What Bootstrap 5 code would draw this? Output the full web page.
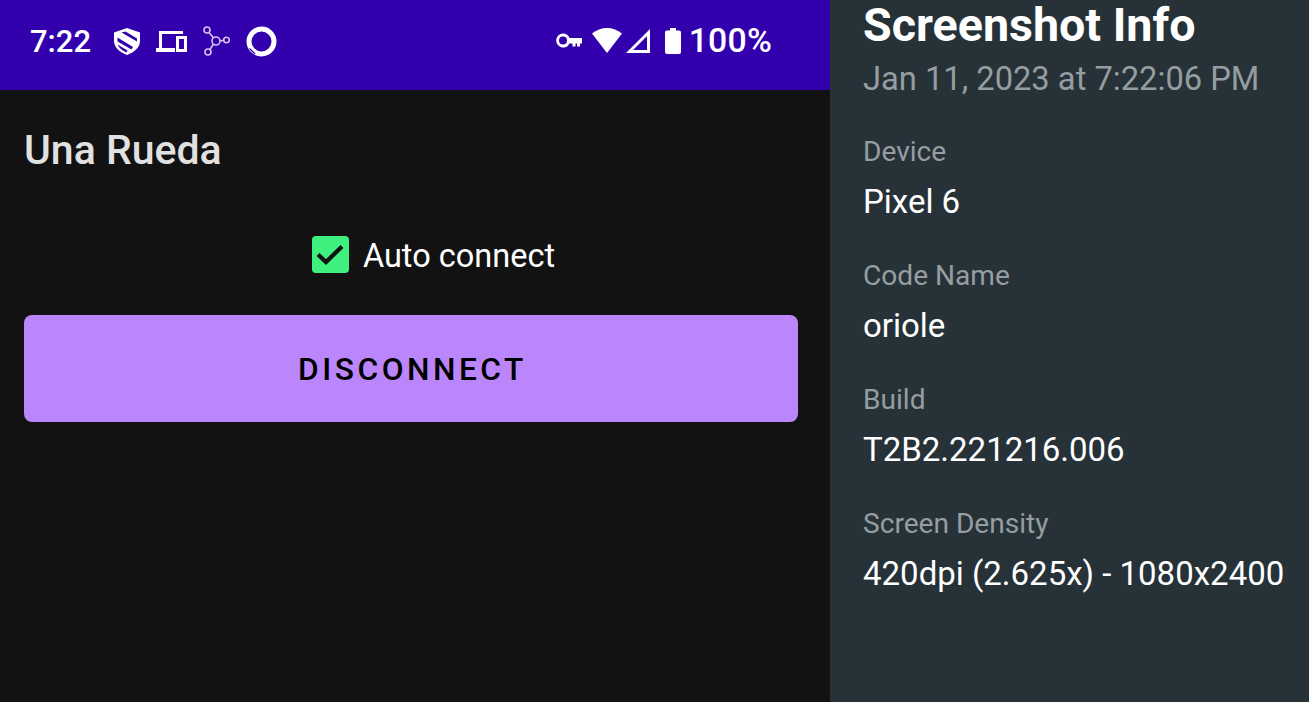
<!DOCTYPE html>
<html lang="en">
<head>
<meta charset="utf-8">
<title>Screenshot</title>
<link href="https://cdn.jsdelivr.net/npm/bootstrap@5.3.0/dist/css/bootstrap.min.css" rel="stylesheet">
<style>
html,body{height:702px;overflow:hidden;margin:0;background:#121212;font-family:Roboto,"Liberation Sans",sans-serif}
.shell{width:1309px;height:702px}
.phone{width:830px;background:#121212}
.statusbar{height:90px;background:#3300ae;padding:0 58px 8px 30px;color:#fff}
.clock{font-size:31px;font-weight:500;line-height:1;width:62px;margin-right:22px}
.pct{font-size:33.800px;font-weight:500;line-height:1;margin-left:8px;color:#fff;letter-spacing:.2px}
.icos{gap:16px}
.gap-key{margin-right:10px}
.gap-wifi{margin-right:4px}
.gap-sig{margin-right:15px}
.app-body{padding:37px 32px 0 24px}
.app-title{font-size:41px;font-weight:500;line-height:44px;color:#e1e1e1;margin:0;padding-top:1px}
.check-row{margin-top:58px;height:50px;gap:14px;padding-left:45px}
.box{width:37px;height:37px;background:#3ff07e;border-radius:4px;margin-bottom:2px}
.check-label{font-size:32.500px;line-height:1;color:#fff;padding-top:2px;font-weight:400}
.disc{display:block;width:100%;height:107px;margin-top:35px;padding-left:15px;background:#bb86fc;border:0;border-radius:8px;color:#000;font-size:31.700px;font-weight:500;letter-spacing:3.500px;line-height:1;padding-top:9px;--bs-btn-hover-bg:#bb86fc;--bs-btn-hover-color:#000}
.side{width:479px;background:#263238;padding:0 0 0 33px;color:#fff}
.side-h{font-size:46.600px;font-weight:700;line-height:50px;margin:0;color:#fff}
.side-date{font-size:32.700px;line-height:38px;margin-top:10px;color:#969da1;white-space:nowrap}
.lbl{font-size:28.100px;line-height:32px;color:#969da1}
.val{font-size:33px;line-height:38px;color:#fff;margin-top:15px;white-space:nowrap}
.item{margin-top:39px}
.item-first{margin-top:38px}
</style>
</head>
<body>
<div class="shell d-flex">
  <div class="phone flex-shrink-0">
    <div class="statusbar d-flex align-items-center justify-content-between">
      <div class="d-flex align-items-center">
        <span class="clock">7:22</span>
        <div class="d-flex align-items-center icos">
          <svg width="26" height="27" viewBox="0 0 26 27"><path fill="#fff" d="M13 0 26 4.500V13c0 6.500-5.500 11-13 14C5.500 24 0 19.500 0 13V4.500z"/><path fill="#3300ae" d="M3.500 9.500 19 19l-1.500 2.500L3.500 13.500zM7.500 4.500 23 13.500V10.500L11.500 3.500zM3.500 16.500l10 6-1 2C9 23 5 20 3.500 16.500z"/></svg>
          <svg width="31" height="21" viewBox="0 0 31 21"><path fill="#fff" fill-rule="evenodd" d="M3 0h24v3H6v14h13v4H0v-4h3zM20 5h11v16H20zm3 3v10h5V8z"/></svg>
          <svg width="27" height="30" viewBox="0 0 27 30" fill="none" stroke="#d5c3f0" stroke-width="1.600"><circle cx="4" cy="4" r="3"/><circle cx="5" cy="26" r="3"/><circle cx="23.500" cy="14" r="2.800"/><circle cx="13" cy="15" r="4"/><path d="M6 6.500l4.500 5.500M7 23.500l3.500-5.500M17 15l4-.7"/></svg>
          <svg width="31" height="31" viewBox="0 0 31 31" fill="none"><circle cx="15.500" cy="15.500" r="12.500" stroke="#fff" stroke-width="5"/><path d="M3.500 22.500 9 28" stroke="#3300ae" stroke-width="1.200"/></svg>
        </div>
      </div>
      <div class="d-flex align-items-center">
        <svg width="26" height="15" viewBox="0 0 26 15" class="gap-key"><path fill="#fff" fill-rule="evenodd" d="M7 .5a7 7 0 0 1 6.500 4.500H26v5.500h-2v3h-3v-3h-1.500v3h-3v-3h-3A7 7 0 1 1 7 .5zm0 3a4 4 0 1 0 0 8 4 4 0 0 0 0-8z"/></svg>
        <svg width="30" height="25" viewBox="0 0 30 25" class="gap-wifi"><path fill="#fff" d="M15 0C20.500 0 25.500 2 30 5.500L15 25 0 5.500C4.500 2 9.500 0 15 0z"/></svg>
        <svg width="24" height="24" viewBox="0 0 24 24" class="gap-sig"><path fill="#fff" fill-rule="evenodd" d="M24 0v24H0zM21 7 7 21h14z"/></svg>
        <svg width="16" height="26" viewBox="0 0 16 26"><path fill="#fff" d="M5 0h6v2.500h3a2 2 0 0 1 2 2V24a2 2 0 0 1-2 2H2a2 2 0 0 1-2-2V4.500a2 2 0 0 1 2-2h3z"/></svg>
        <span class="pct">100%</span>
      </div>
    </div>
    <div class="app-body">
      <h1 class="app-title">Una Rueda</h1>
      <div class="d-flex align-items-center justify-content-center check-row">
        <span class="box d-flex align-items-center justify-content-center"><svg width="28" height="21" viewBox="0 0 28 21" fill="none"><path d="M2 10.500 10 18 26 2.500" stroke="#121212" stroke-width="4.200"/></svg></span>
        <span class="check-label">Auto connect</span>
      </div>
      <button type="button" class="btn disc">DISCONNECT</button>
    </div>
  </div>
  <div class="side flex-grow-1">
    <h2 class="side-h">Screenshot Info</h2>
    <div class="side-date">Jan 11, 2023 at 7:22:06 PM</div>
    <div class="item item-first"><div class="lbl">Device</div><div class="val">Pixel 6</div></div>
    <div class="item"><div class="lbl">Code Name</div><div class="val">oriole</div></div>
    <div class="item"><div class="lbl">Build</div><div class="val">T2B2.221216.006</div></div>
    <div class="item"><div class="lbl">Screen Density</div><div class="val">420dpi (2.625x) - 1080x2400</div></div>
  </div>
</div>
<script src="https://cdn.jsdelivr.net/npm/bootstrap@5.3.0/dist/js/bootstrap.bundle.min.js"></script>
</body>
</html>
